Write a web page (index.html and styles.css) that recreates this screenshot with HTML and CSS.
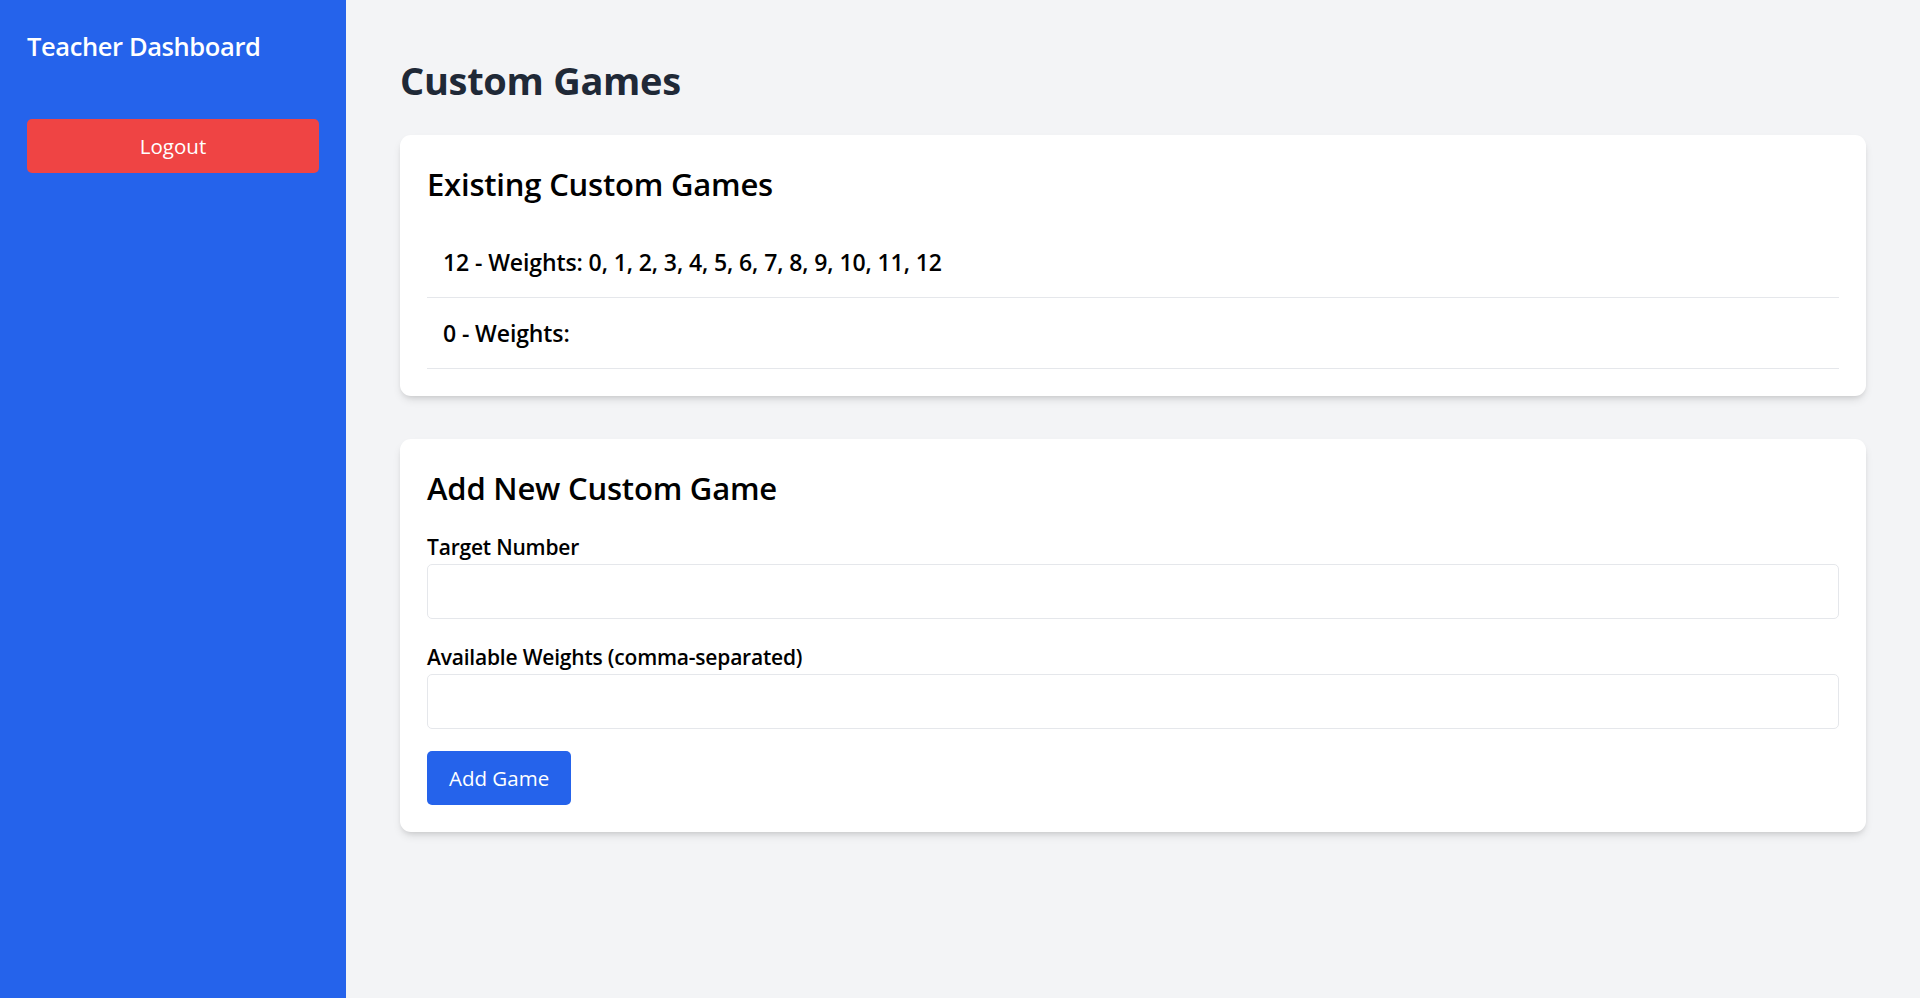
FILE: index.html
```html
<!DOCTYPE html>
<html lang="en">
<head>
<meta charset="utf-8">
<title>Teacher Dashboard</title>
<link rel="stylesheet" href="styles.css">
</head>
<body>
<div class="layout">
  <aside class="sidebar">
    <h2 class="brand">Teacher Dashboard</h2>
    <button class="logout">Logout</button>
  </aside>
  <main class="main">
    <h1 class="page-title">Custom Games</h1>
    <section class="card">
      <h2 class="card-title">Existing Custom Games</h2>
      <ul class="game-list">
        <li class="game-item">12 - Weights: 0, 1, 2, 3, 4, 5, 6, 7, 8, 9, 10, 11, 12</li>
        <li class="game-item">0 - Weights: </li>
      </ul>
    </section>
    <section class="card">
      <h2 class="card-title">Add New Custom Game</h2>
      <form class="form">
        <div class="field">
          <label class="label">Target Number</label>
          <input class="input" type="number">
        </div>
        <div class="field">
          <label class="label">Available Weights (comma-separated)</label>
          <input class="input" type="text">
        </div>
        <button type="button" class="add-btn">Add Game</button>
      </form>
    </section>
  </main>
</div>
</body>
</html>
```

FILE: styles.css
```css
* { box-sizing: border-box; }
html, body { margin: 0; padding: 0; height: 100%; }
body {
  font-family: "Open Sans", "Noto Sans", sans-serif;
  color: #000;
  background: #f3f4f6;
}
.layout {
  display: flex;
  min-height: 998px;
}
.sidebar {
  width: 346px;
  flex-shrink: 0;
  background: #2563eb;
  padding: 27px;
}
.brand {
  margin: 0 0 54px;
  font-size: 25.5px;
  line-height: 38px;
  font-weight: 600;
  color: #fff;
  letter-spacing: -0.4px;
}
.logout {
  display: block;
  width: 100%;
  height: 54px;
  border: 0;
  border-radius: 5px;
  background: #ef4444;
  color: #fff;
  font-family: inherit;
  font-size: 20.5px;
}
.main {
  flex: 1;
  padding: 56px 54px 54px;
}
.page-title {
  margin: 0 0 30px;
  font-size: 38px;
  line-height: 49px;
  font-weight: 700;
  color: #1f2937;
  letter-spacing: -0.3px;
}
.card {
  background: #fff;
  border-radius: 11px;
  box-shadow: 0 5px 8px -1px rgba(0,0,0,0.1), 0 3px 5px -2px rgba(0,0,0,0.1);
  padding: 27px;
  margin-bottom: 43px;
}
.card-title {
  margin: 0 0 22px;
  padding-top: 1px;
  font-size: 31px;
  line-height: 42px;
  font-weight: 600;
  letter-spacing: -0.2px;
}
.game-list {
  list-style: none;
  margin: 0;
  padding: 0;
}
.game-item {
  padding: 16px;
  font-size: 23px;
  line-height: 38px;
  font-weight: 600;
  border-bottom: 1.35px solid #e5e7eb;
  letter-spacing: -0.1px;
}
.form { display: flex; flex-direction: column; align-items: flex-start; }
.field { width: 100%; margin-bottom: 22px; }
.label {
  display: block;
  font-size: 21px;
  line-height: 33px;
  font-weight: 600;
  letter-spacing: -0.2px;
}
.input {
  display: block;
  width: 100%;
  height: 55px;
  border: 1.35px solid #e5e7eb;
  border-radius: 5px;
  font-family: inherit;
  font-size: 21px;
  padding: 0 16px;
}
.add-btn {
  height: 54px;
  padding: 0 22px;
  border: 0;
  border-radius: 5px;
  background: #2563eb;
  color: #fff;
  font-family: inherit;
  font-size: 20.5px;
}
```
